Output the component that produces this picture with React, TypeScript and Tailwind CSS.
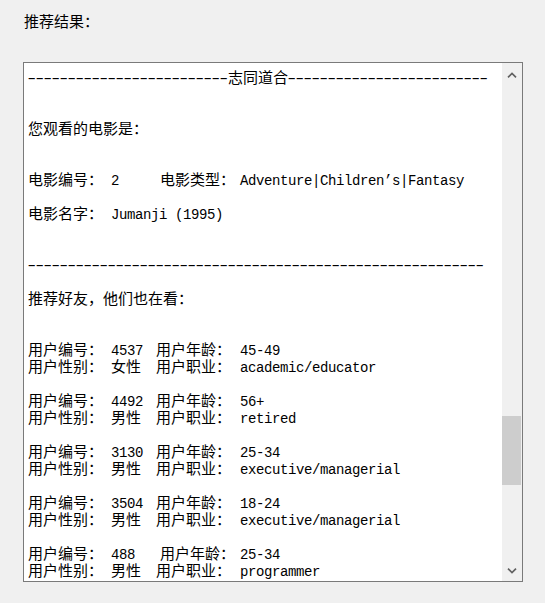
import React from "react";

const ASCII = /[\x20-\x7e\u2019]+|[^\x20-\x7e\u2019]+/g;

function Txt({ s }: { s: string }) {
  const parts = s.match(ASCII) ?? [];
  return (
    <>
      {parts.map((p, i) =>
        /^[\x20-\x7e\u2019]/.test(p) ? (
          <span
            key={i}
            className="font-['Liberation_Mono',monospace] text-[14px] tracking-[-0.4px]"
          >
            {p}
          </span>
        ) : (
          <span key={i}>{p}</span>
        )
      )}
    </>
  );
}

// SimSun draws long hyphens; stretch one run of them instead of each glyph
function Dashes({ n, w }: { n: number; w: string }) {
  return (
    <span className={`inline-block ${w}`}>
      <span className="-ml-[3px] inline-block origin-left scale-x-[1.6] font-['Liberation_Mono',monospace] text-[14px] tracking-[-3.4px]">
        {"-".repeat(n)}
      </span>
    </span>
  );
}

const Blank = () => <div className="h-[17px]" />;

interface RowProps {
  a: string;
  av: string;
  b: string;
  bv: string;
  wide?: boolean;
}

function Row({ a, av, b, bv, wide }: RowProps) {
  return (
    <div className="flex h-[17px] whitespace-pre">
      <span className="w-[83px] shrink-0">
        <Txt s={a} />
      </span>
      <span className={wide ? "w-[49px] shrink-0" : "w-[45px] shrink-0"}>
        <Txt s={av} />
      </span>
      <span className={wide ? "w-[80px] shrink-0" : "w-[84px] shrink-0"}>
        <Txt s={b} />
      </span>
      <span>
        <Txt s={bv} />
      </span>
    </div>
  );
}

const users = [
  { id: "4537", age: "45-49", sex: "女性", job: "academic/educator" },
  { id: "4492", age: "56+", sex: "男性", job: "retired" },
  { id: "3130", age: "25-34", sex: "男性", job: "executive/managerial" },
  { id: "3504", age: "18-24", sex: "男性", job: "executive/managerial" },
  { id: "488", age: "25-34", sex: "男性", job: "programmer" },
];

function Chevron({ down }: { down?: boolean }) {
  return (
    <svg width="10" height="6" viewBox="0 0 10 6" className={down ? "rotate-180" : ""}>
      <polyline
        points="1,5.3 5,1.5 9,5.3"
        fill="none"
        stroke="#606060"
        strokeWidth="1.7"
      />
    </svg>
  );
}

export default function App() {
  return (
    <div className="min-h-[603px] w-full bg-[#f0f0f0] pl-[23px] pt-[11px] font-['Noto_Sans_CJK_SC',sans-serif] text-[15px] text-black">
      <div className="pl-[1px] leading-[20px]">推荐结果：</div>
      <div className="mt-[31px] flex h-[520px] w-[500px] border border-[#7a7a7a] bg-white">
        <div className="flex-1 overflow-hidden pl-[4px] pt-[5px] leading-[17px]">
          <div className="h-[17px] whitespace-pre">
            <Dashes n={25} w="w-[200px]" />
            <span>志同道合</span>
            <Dashes n={25} w="w-[200px]" />
          </div>
          <Blank />
          <Blank />
          <div className="h-[17px]">您观看的电影是：</div>
          <Blank />
          <Blank />
          <Row a="电影编号： " av="2" b="电影类型： " bv="Adventure|Children’s|Fantasy" wide />
          <Blank />
          <div className="h-[17px] whitespace-pre">
            <Txt s="电影名字： Jumanji (1995)" />
          </div>
          <Blank />
          <Blank />
          <div className="h-[17px] whitespace-pre">
            <Dashes n={57} w="w-[456px]" />
          </div>
          <Blank />
          <div className="h-[17px]">推荐好友，他们也在看：</div>
          <Blank />
          <Blank />
          {users.map((u) => (
            <div key={u.id}>
              <Row a="用户编号： " av={u.id} b="用户年龄： " bv={u.age} wide={u.id.length < 4} />
              <Row a="用户性别： " av={u.sex} b="用户职业： " bv={u.job} />
              <Blank />
            </div>
          ))}
        </div>
        <div className="flex w-[20px] flex-col bg-[#f0f0f0]">
          <div className="flex h-[24px] items-center justify-center">
            <Chevron />
          </div>
          <div className="flex-1">
            <div className="h-[329px]" />
            <div className="h-[69px] w-[19px] bg-[#cdcdcd]" />
          </div>
          <div className="flex h-[20px] items-center justify-center">
            <Chevron down />
          </div>
        </div>
      </div>
    </div>
  );
}
